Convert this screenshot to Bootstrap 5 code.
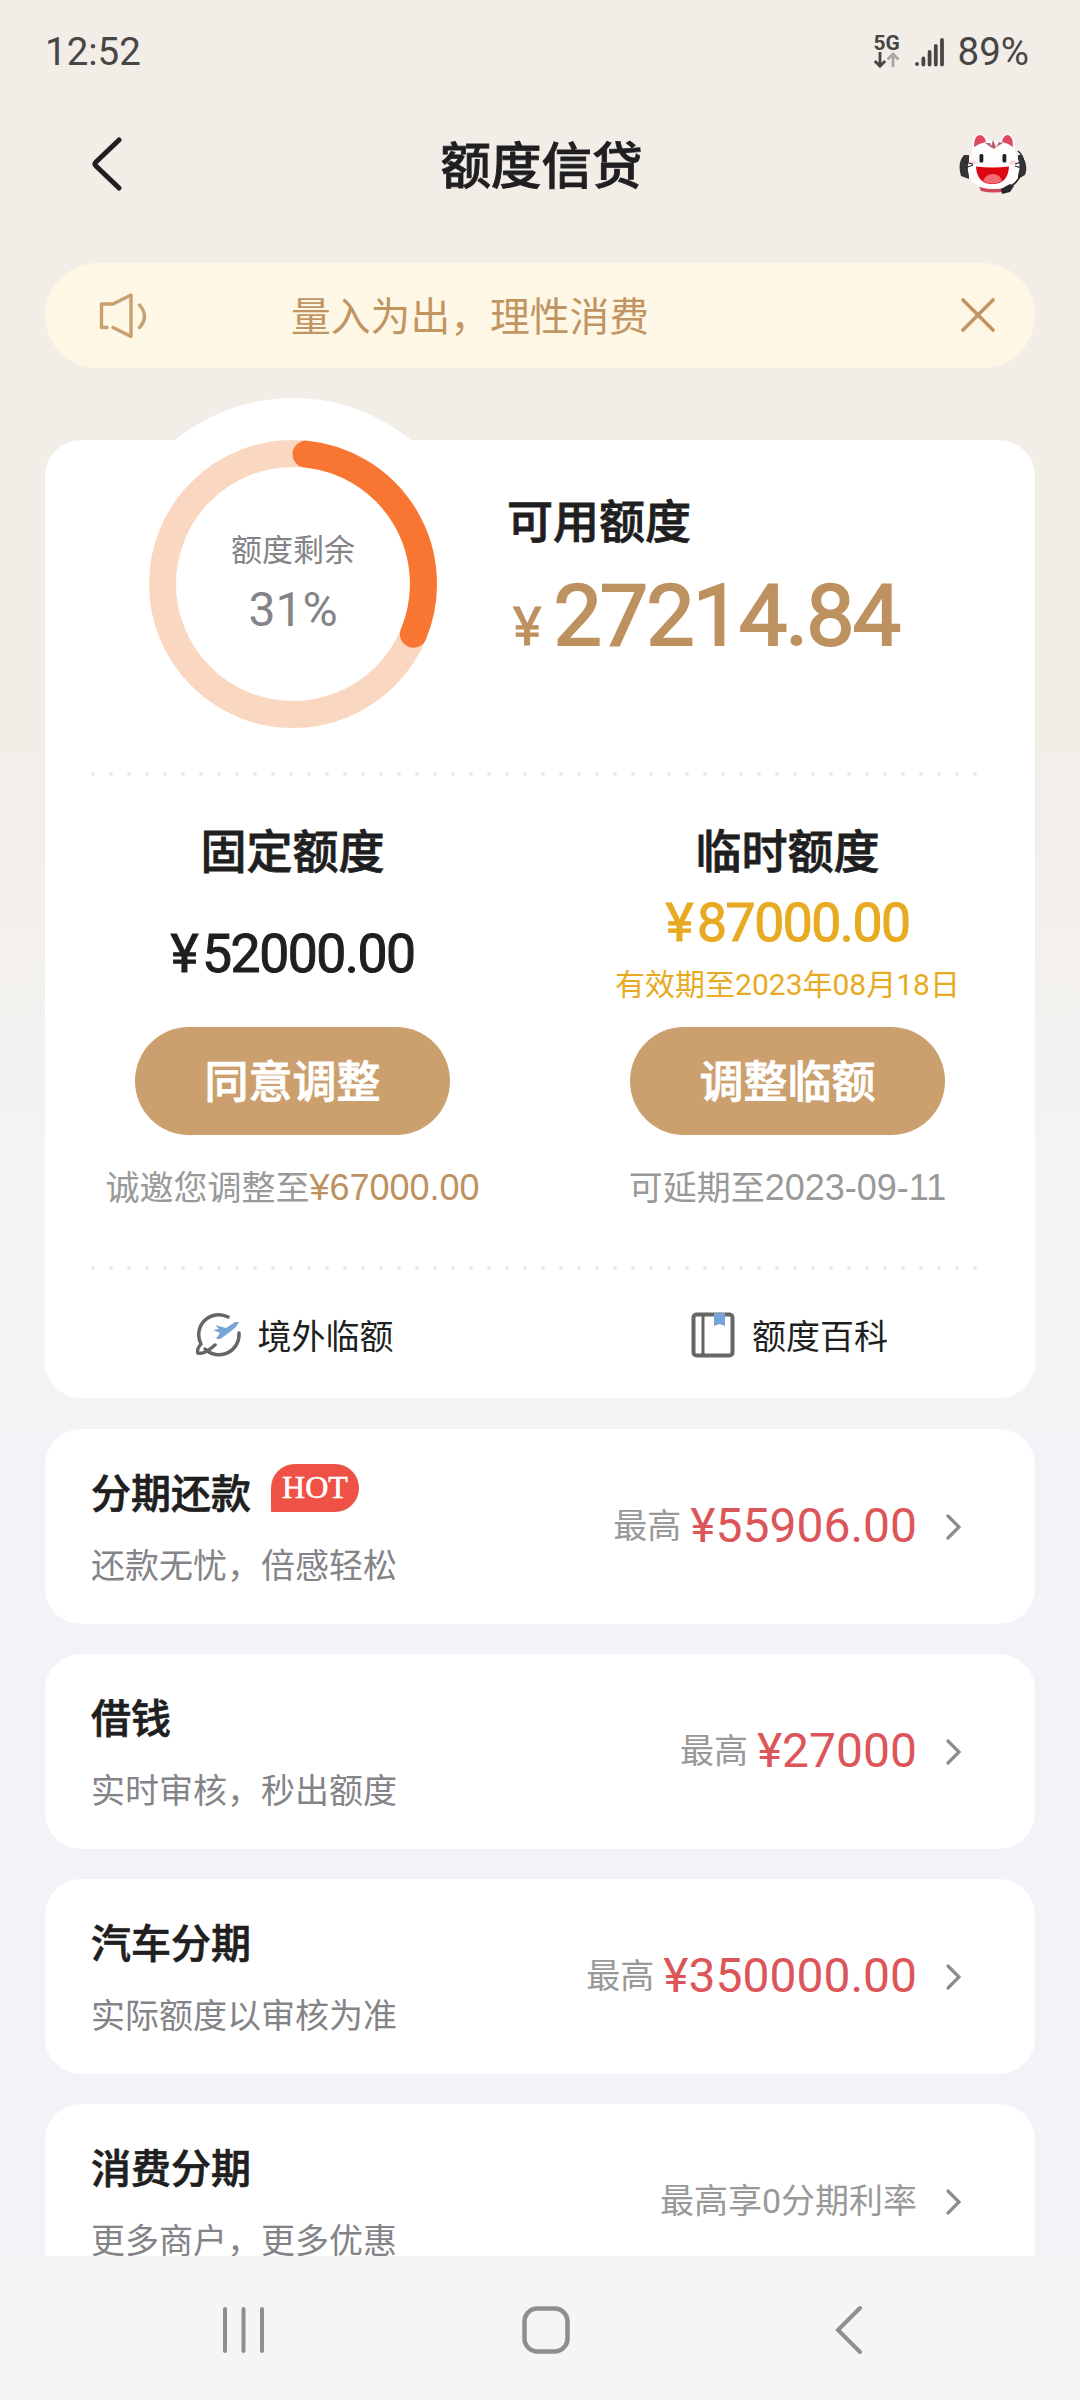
<!DOCTYPE html>
<html lang="zh-CN">
<head>
<meta charset="utf-8">
<meta name="viewport" content="width=device-width, initial-scale=1">
<title>额度信贷</title>
<link href="https://cdn.jsdelivr.net/npm/bootstrap@5.3.0/dist/css/bootstrap.min.css" rel="stylesheet">
<style>
body{width:1080px;height:2400px;overflow:hidden;font-family:Roboto,"Noto Sans CJK SC",sans-serif;color:#1f1f21;line-height:1;
background:linear-gradient(#f2ede7 0,#f2ede7 740px,#f4f4f4 1180px,#f4f4f4 1431px,#f2f3f8 1431px)}
svg{display:block;flex:none}
.statusbar{height:104px;padding:0 51px 0 45px;font-size:38.5px;color:#484644}
.fiveg{font-size:21px;font-weight:700;line-height:18px;width:28px;margin-top:-2px}
.titlebar{height:159px;padding:0 52px 37px 88px}
.page-name{font-size:50.5px;font-weight:500;-webkit-text-stroke:.8px;padding-top:4px}
.notice{height:105px;margin:0 45px;padding:0 39px 0 54px;background:#fff7e6;color:#c19562;font-size:39.8px}
.panel{margin:72px 45px 0;height:958px;border-radius:36px;background:#fff}
.summary{height:332px}
.dial{width:372px;height:372px;margin:-42px 0 0 62px}
.dial-text{position:absolute;inset:0;color:#838388}
.avail{margin-left:28px}
.h46{font-size:46px;font-weight:500;line-height:56px;-webkit-text-stroke:.8px}
.big{font-size:86px;font-weight:400;color:#be9160;letter-spacing:-1.9px;line-height:80px;-webkit-text-stroke:2px}
.yen{font-size:54px;letter-spacing:0;margin:0 12px 0 6px;-webkit-text-stroke:1px}
.dots{height:4px;margin:0 46px;background:radial-gradient(circle at 2px 2px,#e8e8ea 1.500px,transparent 2.200px) 0 0/18px 4px repeat-x}
.amt{font-size:53.5px;letter-spacing:-1.5px;height:147px;-webkit-text-stroke:1px}
.amt i{font-style:normal;margin-right:5px}
.valid{font-size:30px;letter-spacing:0;-webkit-text-stroke:0;margin-top:20px}
.gold{color:#e8aa22}
.pill{width:315px;height:108px;padding-top:4px;border-radius:54px;background:#cba06e;color:#fff;font-size:44px;font-weight:500;-webkit-text-stroke:.8px}
.hint{font-size:34px;color:#999;line-height:50px;margin-top:28px}
.lat{font-family:"Liberation Sans",sans-serif;font-size:36px}
.links{height:134px;font-size:34px}
.links svg{margin-top:-5px}
.rowcard{height:195px;margin:0 45px 30px;padding:0 72px 0 46px;border-radius:36px;background:#fff}
.rt{font-size:40px;font-weight:500;line-height:48px;margin-top:7px;-webkit-text-stroke:.7px}
.rs{font-size:34px;color:#838388;line-height:48px;margin-top:23px}
.hot{width:88px;height:48px;border-radius:24px 24px 24px 1px;background:#ef5146;color:#fff;font:32px "Liberation Serif",serif;margin:-7px 0 0 20px;-webkit-text-stroke:.6px}
.most{font-size:34px;color:#999;margin-top:-1px}
.red{font-size:48px;color:#dc5659;margin-left:9px;margin-top:-2px}
.sysnav{position:absolute;left:0;top:2256px;width:1080px;height:144px;background:#f5f5f5}
</style>
<script src="https://cdn.jsdelivr.net/npm/bootstrap@5.3.0/dist/js/bootstrap.bundle.min.js"></script>
</head>
<body class="position-relative">
<div class="statusbar d-flex justify-content-between align-items-center">
  <span>12:52</span>
  <div class="d-flex align-items-center">
    <div class="fiveg"><div>5G</div>
      <svg width="26" height="16" viewBox="0 0 26 16" fill="none" stroke-width="2.800"><path d="M6 0v14M0.800 9l5.200 5.200L11.200 9" stroke="#484644"/><path d="M19 15V2M13.500 7.500L19 2l5.500 5.500" stroke="#aaa6a2"/></svg></div>
    <svg style="margin-left:13px" width="29" height="30" viewBox="0 0 29 30" stroke="#484644" stroke-width="3.800" stroke-linecap="round"><path d="M2 27v0M8.400 21.500v6M14.600 15v12.500M20.800 9v18.500M27 3v24.500"/></svg>
    <span style="margin-left:14px">89%</span>
  </div>
</div>
<div class="titlebar d-flex justify-content-between align-items-center">
  <svg style="margin-left:2px" width="34" height="56" viewBox="0 0 34 56" fill="none" stroke="#1f1f21" stroke-width="5" stroke-linecap="round" stroke-linejoin="round"><path d="M29 3L6 25q-2 2 0 4L29 51"/></svg>
  <div class="page-name">额度信贷</div>
  <svg width="69" height="64" viewBox="0 0 69 64">
    <path d="M5 22Q-2 30 2 43l8 3V22zM62 22q8 9 4 20l-7 4V22z" fill="#353437"/>
    <path d="M59 18q5 4 6 12" stroke="#2b2b2d" stroke-width="1.500" fill="none"/>
    <path d="M20 53q14 6 30 0l-2 5q-13 3-26 0z" fill="#d0485c"/>
    <path d="M13 22Q12 1 20 1q6 0 9 7h12q3-7 8-7 7 1 7 19 6 10 4 18-2 18-25 18Q11 56 9 38q-1-9 4-16z" fill="#fffdfd"/>
    <path d="M15 14q0-12 6-12 5 1 6 7-6 1-12 5zM43 9q1-7 6-7 5 1 5 12-5-4-11-5z" fill="#dd4860"/>
    <path d="M26 10l7 5-2-5zM34 7l-2 7 3 2 2-2zM44 10l-7 4 3-5z" fill="#b9606c"/>
    <rect x="20.500" y="21" width="3.800" height="8.500" rx="1.500" fill="#202022"/><rect x="43.500" y="21" width="3.800" height="8.500" rx="1.500" fill="#202022"/>
    <ellipse cx="14" cy="29.500" rx="4" ry="2" fill="#fbd5d8"/><ellipse cx="54" cy="29.500" rx="4" ry="2" fill="#fbd5d8"/>
    <path d="M17 33.500q16 2 33 0-1 17.500-16.500 17.500T17 33.500z" fill="#dc0713"/><path d="M24 48q3-7 10-7t9 7q-9 5-19 0z" fill="#f46a72"/>
    <path d="M5 29l9 2M6 35l8-3M56 31l7-2M56 33l7 2" stroke="#2b2b2d" stroke-width="1.200"/>
    <path d="M62 41q-4 10-12 13" fill="none" stroke="#28282a" stroke-width="1.800"/><path d="M42 56l9-5 4 2-4 6-8 2z" fill="#28282a"/>
  </svg>
</div>
<div class="notice rounded-pill d-flex align-items-center">
  <svg width="50" height="50" viewBox="0 0 50 50" fill="none" stroke="#c9a06f" stroke-width="3.400" stroke-linejoin="round" stroke-linecap="round"><path d="M8 36.500H2.500V13H14L32 4v41.500L14 36.500"/><path d="M40.500 14q10 11.500 0 22.500"/></svg>
  <span class="flex-grow-1" style="padding:4px 0 0 142px">量入为出，理性消费</span>
  <svg width="36" height="36" viewBox="0 0 36 36" stroke="#c19562" stroke-width="3.600" stroke-linecap="round"><path d="M3 2l30 30M33 2L3 32"/></svg>
</div>
<main>
<section class="panel">
  <div class="summary d-flex">
    <div class="dial position-relative bg-white rounded-circle">
      <svg width="372" height="372" viewBox="-186 -186 372 372" fill="none" stroke-width="27"><circle r="130.500" stroke="#fad7c0"/><path d="M13-129.900A130.500 130.500 0 0 1 120.400 50.200" stroke="#f97632" stroke-linecap="round"/></svg>
      <div class="dial-text d-flex flex-column align-items-center justify-content-center"><span style="font-size:31px">额度剩余</span><span style="font-size:48px;margin-top:20px">31%</span></div>
    </div>
    <div class="avail"><div class="h46" style="margin-top:54px">可用额度</div><div class="big" style="margin-top:26px"><span class="yen">¥</span>27214.84</div></div>
  </div>
  <div class="dots"></div>
  <div class="row g-0 text-center" style="height:490px">
    <div class="col-6 d-flex flex-column align-items-center">
      <div class="h46" style="margin-top:48px">固定额度</div>
      <div class="amt d-flex align-items-center"><i>¥</i>52000.00</div>
      <div class="pill d-flex align-items-center justify-content-center">同意调整</div>
      <div class="hint">诚邀您调整至<span class="lat" style="color:#be9160">¥67000.00</span></div>
    </div>
    <div class="col-6 d-flex flex-column align-items-center">
      <div class="h46" style="margin-top:48px">临时额度</div>
      <div class="amt gold"><div style="padding-top:16px"><i>¥</i>87000.00</div><div class="valid">有效期至2023年08月18日</div></div>
      <div class="pill d-flex align-items-center justify-content-center">调整临额</div>
      <div class="hint">可延期至<span class="lat">2023-09-11</span></div>
    </div>
  </div>
  <div class="dots"></div>
  <div class="row g-0 links">
    <div class="col-6 d-flex align-items-center justify-content-center ps-1"><svg width="46" height="46" viewBox="0 0 46 46" fill="none" stroke="#666" stroke-width="3.500" stroke-linecap="round"><path d="M32 5A20 20 0 0 0 5 32Q0 38 2 41q6 2 17-8"/><path d="M9 37A20 20 0 0 0 43 21"/><path d="M19 13l11 3 9-6 4 0-3 5-10 8-6 4-4 0 4-6-7-3 6-1z" fill="#78a5d8" stroke="none"/></svg><span style="margin-left:16px">境外临额</span></div>
    <div class="col-6 d-flex align-items-center justify-content-center ps-1"><svg width="44" height="46" viewBox="0 0 44 46" fill="none" stroke="#666" stroke-width="4"><rect x="2.500" y="2.500" width="39" height="41" rx="3"/><path d="M12 3v40" stroke-width="3"/><path d="M23 1h11v13l-5.500-2-5.500 2z" fill="#78a5d8" stroke="none"/></svg><span style="margin-left:17px">额度百科</span></div>
  </div>
</section>
<section style="margin-top:31px">
  <div class="rowcard d-flex justify-content-between align-items-center">
    <div><div class="rt d-flex">分期还款<span class="hot d-flex align-items-center justify-content-center">HOT</span></div><div class="rs">还款无忧，倍感轻松</div></div>
    <div class="d-flex align-items-center"><span class="most">最高</span><span class="red">¥55906.00</span><svg style="margin-left:28px" width="18" height="28" viewBox="0 0 18 28" fill="none" stroke="#8d8d91" stroke-width="3.200" stroke-linecap="round"><path d="M3 3l11 11L3 25"/></svg></div>
  </div>
  <div class="rowcard d-flex justify-content-between align-items-center">
    <div><div class="rt">借钱</div><div class="rs">实时审核，秒出额度</div></div>
    <div class="d-flex align-items-center"><span class="most">最高</span><span class="red">¥27000</span><svg style="margin-left:28px" width="18" height="28" viewBox="0 0 18 28" fill="none" stroke="#8d8d91" stroke-width="3.200" stroke-linecap="round"><path d="M3 3l11 11L3 25"/></svg></div>
  </div>
  <div class="rowcard d-flex justify-content-between align-items-center">
    <div><div class="rt">汽车分期</div><div class="rs">实际额度以审核为准</div></div>
    <div class="d-flex align-items-center"><span class="most">最高</span><span class="red">¥350000.00</span><svg style="margin-left:28px" width="18" height="28" viewBox="0 0 18 28" fill="none" stroke="#8d8d91" stroke-width="3.200" stroke-linecap="round"><path d="M3 3l11 11L3 25"/></svg></div>
  </div>
  <div class="rowcard d-flex justify-content-between align-items-center">
    <div><div class="rt">消费分期</div><div class="rs">更多商户，更多优惠</div></div>
    <div class="d-flex align-items-center"><span class="most">最高享0分期利率</span><svg style="margin-left:28px" width="18" height="28" viewBox="0 0 18 28" fill="none" stroke="#8d8d91" stroke-width="3.200" stroke-linecap="round"><path d="M3 3l11 11L3 25"/></svg></div>
  </div>
</section>
</main>
<nav class="sysnav d-flex align-items-center" style="padding:4px 216px 0 220px">
  <div class="d-flex justify-content-between w-100">
  <svg width="48" height="50" viewBox="0 0 48 50" stroke="#8e8e8e" stroke-width="4" stroke-linecap="round"><path d="M5 4v42M23.500 4v42M42 4v42"/></svg>
  <svg style="margin-right:10px" width="50" height="50" viewBox="0 0 50 50" fill="none" stroke="#8e8e8e" stroke-width="4.500"><rect x="3.500" y="3.500" width="43" height="43" rx="13"/></svg>
  <svg width="30" height="50" viewBox="0 0 30 50" fill="none" stroke="#8e8e8e" stroke-width="4" stroke-linecap="round"><path d="M26 3L4 25l22 22"/></svg>
  </div>
</nav>
</body>
</html>
